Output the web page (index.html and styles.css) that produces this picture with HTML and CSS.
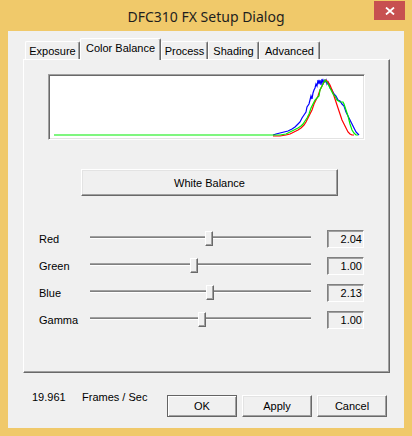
FILE: index.html
```html
<!DOCTYPE html>
<html>
<head>
<meta charset="utf-8">
<link rel="stylesheet" href="styles.css">
</head>
<body>
<div class="window">
  <div class="titlebar">
    <span class="title">DFC310 FX Setup Dialog</span>
    <div class="close">
      <svg width="10" height="8" viewBox="0 0 10 8"><path d="M1 0.5 L9 7.5 M9 0.5 L1 7.5" stroke="#fff" stroke-width="1.8" fill="none"/></svg>
    </div>
  </div>
  <div class="client">
    <div class="tabs">
      <div class="tab t-exp">Exposure</div>
      <div class="tab active t-cb">Color Balance</div>
      <div class="tab t-proc">Process</div>
      <div class="tab t-shad">Shading</div>
      <div class="tab t-adv">Advanced</div>
    </div>
    <div class="panel">
      <div class="hist">
        <svg width="313" height="62" viewBox="50 76 313 62">
          <polyline fill="none" stroke="#0000ff" stroke-width="1.2" points="273,135 276,134 280,133 284,132 288,131 292,129 295,127 298,124 300,122 302,118 304,115 306,112 307,107 309,104 310,100 311,96 312,99 313,93 314,90 315,88 316,84 317,86 318,80 319,84 320,80 321,85 322,79 323,83 324,80 325,82 326,80 327,84 328,82 330,88 332,90 334,94 336,96 337,98 338,100 340,101 342,104 344,106 346,112 348,116 350,120 352,124 354,128 356,132 358,134 359,135"/>
          <polyline fill="none" stroke="#ff0000" stroke-width="1.2" points="273,136 280,136 286,135 290,134 294,132 298,130 301,128 304,125 306,122 308,118 310,114 312,110 314,104 316,100 318,96 320,90 322,86 324,82 326,80 328,82 330,85 332,90 334,96 336,102 338,108 340,114 342,120 344,124 346,128 348,132 350,134 352,135 354,135"/>
          <polyline fill="none" stroke="#00ee00" stroke-width="1.2" points="54,135 273,135 280,135 286,134 290,132 294,130 298,128 301,126 303,124 305,121 307,118 309,114 311,108 313,104 315,100 317,98 319,96 320,90 322,86 324,82 325,80 327,82 329,86 331,90 333,94 335,96 337,100 340,102 343,102 344,104 346,110 348,116 350,124 352,130 354,133 356,135 358,135"/>
        </svg>
      </div>
      <button class="btn wb">White Balance</button>
      <div class="sliders">
        <div class="srow"><span class="lbl">Red</span><div class="track"><div class="thumb" style="left:115px"></div></div><div class="val">2.04</div></div>
        <div class="srow"><span class="lbl">Green</span><div class="track"><div class="thumb" style="left:100px"></div></div><div class="val">1.00</div></div>
        <div class="srow"><span class="lbl">Blue</span><div class="track"><div class="thumb" style="left:116px"></div></div><div class="val">2.13</div></div>
        <div class="srow"><span class="lbl">Gamma</span><div class="track"><div class="thumb" style="left:108px"></div></div><div class="val">1.00</div></div>
      </div>
    </div>
    <div class="footer">
      <span class="fps">19.961</span>
      <span class="fpslbl">Frames / Sec</span>
      <div class="btns">
        <button class="btn dlg default">OK</button>
        <button class="btn dlg">Apply</button>
        <button class="btn dlg">Cancel</button>
      </div>
    </div>
  </div>
</div>
</body>
</html>
```

FILE: styles.css
```css
body {
  margin: 0;
  font-family: "Liberation Sans", Arial, sans-serif;
  font-size: 11px;
  color: #000;
}
.window {
  width: 412px;
  height: 436px;
  box-sizing: border-box;
  background: #f0c96a;
  padding: 0 8px 8px;
  display: flex;
  flex-direction: column;
}
.titlebar {
  height: 31px;
  margin: 0 -8px;
  position: relative;
  display: flex;
  align-items: center;
  justify-content: center;
}
.title {
  font-family: "Noto Sans", "Open Sans", sans-serif;
  font-size: 14px;
  color: #1e1e1e;
  margin-top: 1px;
}
.close {
  position: absolute;
  top: 1px;
  right: 7px;
  width: 31px;
  height: 19px;
  background: #c75050;
  display: flex;
  align-items: center;
  justify-content: center;
}
.close svg { display: block; }
.client {
  flex: 1;
  background: #f0f0f0;
  padding: 7px 14px 0 15px;
  display: flex;
  flex-direction: column;
}
.tabs {
  display: flex;
  align-items: flex-end;
  height: 22px;
  padding-left: 2px;
  margin-bottom: -1px;
  position: relative;
  z-index: 1;
}
.tab {
  box-sizing: border-box;
  height: 18px;
  margin-bottom: 1px;
  border-top: 1px solid #fff;
  border-left: 1px solid #fff;
  border-right: 1px solid #696969;
  box-shadow: inset -1px 0 #a0a0a0;
  background: #f0f0f0;
  display: flex;
  align-items: center;
  justify-content: center;
  border-top-left-radius: 2px;
  border-top-right-radius: 2px;
}
.tab.active {
  height: 22px;
  margin-bottom: 0;
  padding-bottom: 3px;
}
.t-exp { width: 55px; }
.t-cb { width: 81px; }
.t-proc { width: 47px; }
.t-shad { width: 51px; }
.t-adv { width: 61px; }
.panel {
  box-sizing: border-box;
  width: 367px;
  height: 314px;
  border-top: 1px solid #fff;
  border-left: 1px solid #fff;
  border-right: 1px solid #696969;
  border-bottom: 1px solid #696969;
  box-shadow: inset -1px -1px #a0a0a0;
  padding-top: 14px;
  display: flex;
  flex-direction: column;
  align-items: flex-start;
}
.hist {
  margin-left: 24px;
  width: 317px;
  height: 66px;
  box-sizing: border-box;
  border-top: 1px solid #a0a0a0;
  border-left: 1px solid #a0a0a0;
  border-right: 1px solid #fff;
  border-bottom: 1px solid #fff;
  box-shadow: inset 1px 1px #696969, inset -1px -1px #e3e3e3;
  background: #fff;
  padding: 1px;
}
.hist svg { display: block; }
.btn {
  box-sizing: border-box;
  background: #f0f0f0;
  border: 1px solid;
  border-color: #fff #696969 #696969 #fff;
  box-shadow: inset -1px -1px #a0a0a0, inset 1px 1px #e3e3e3;
  font-family: "Liberation Sans", Arial, sans-serif;
  font-size: 11px;
  color: #000;
  padding: 0;
}
.wb {
  margin-top: 29px;
  margin-left: 57px;
  width: 257px;
  height: 27px;
}
.sliders {
  margin-top: 29px;
  padding-left: 15px;
}
.srow {
  display: flex;
  align-items: center;
  height: 27px;
}
.lbl { width: 51px; }
.track {
  position: relative;
  width: 221px;
  height: 3px;
  box-sizing: border-box;
  border-top: 1px solid #a0a0a0;
  border-bottom: 1px solid #fff;
  background: #808080;
  margin-top: -2px;
}
.thumb {
  position: absolute;
  top: 50%;
  width: 8px;
  height: 15px;
  margin-top: -7px;
  box-sizing: border-box;
  border: 1px solid;
  border-color: #fff #696969 #696969 #fff;
  box-shadow: inset -1px -1px #a0a0a0;
  background: #f0f0f0;
}
.val {
  margin-left: 16px;
  width: 37px;
  height: 18px;
  box-sizing: border-box;
  border: 1px solid;
  border-color: #808080 #fff #fff #808080;
  box-shadow: inset 1px 1px #a0a0a0;
  text-align: right;
  padding-right: 1px;
  line-height: 16px;
}
.footer {
  display: flex;
  align-items: flex-start;
  height: 55px;
}
.fps {
  margin-top: 18px;
  margin-left: 9px;
  width: 50px;
}
.fpslbl {
  margin-top: 18px;
  width: 85px;
}
.btns {
  display: flex;
  gap: 5px;
  margin-top: 22px;
}
.dlg {
  width: 70px;
  height: 22px;
}
.default {
  border-color: #646464;
  box-shadow: inset 1px 1px #fff, inset -1px -1px #a0a0a0;
}
```
